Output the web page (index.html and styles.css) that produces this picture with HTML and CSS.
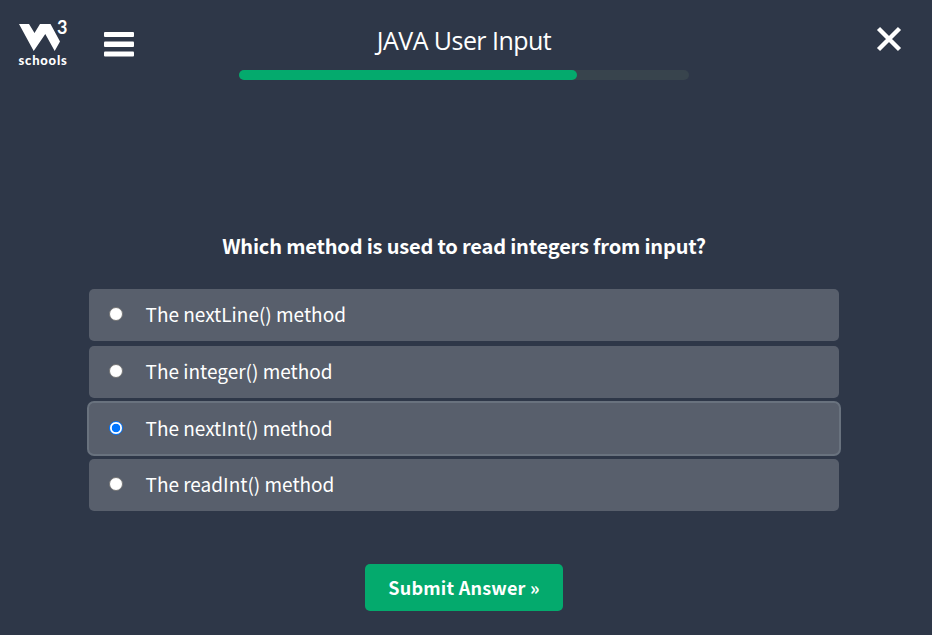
FILE: index.html
```html
<!DOCTYPE html>
<html lang="en">
<head>
<meta charset="utf-8">
<title>JAVA User Input</title>
<link rel="stylesheet" href="styles.css">
</head>
<body>
<header class="topbar">
  <a class="logo" aria-label="W3Schools">
    <span class="logo-top">
      <svg class="logo-mark" width="42" height="28" viewBox="0 0 42 28"><path fill="#fff" d="M0 0H10L15.500 9L21 0H31.500L41 17.500L35.700 27L26.300 10L14.700 27Z"/></svg>
      <span class="logo-three">3</span>
    </span>
    <span class="logo-word">schools</span>
  </a>
  <svg class="menu" width="30" height="25" viewBox="0 0 30 25"><g fill="#fff"><rect width="30" height="5" rx="1"/><rect y="9.500" width="30" height="5.500" rx="1"/><rect y="19.500" width="30" height="5" rx="1"/></g></svg>
  <div class="heading">
    <h1>JAVA User Input</h1>
    <div class="track"><div class="fill"></div></div>
  </div>
  <svg class="close" width="26" height="26" viewBox="0 0 26 26"><path d="M2.500 2.500L23.500 23.500M23.500 2.500L2.500 23.500" stroke="#fff" stroke-width="4.400"/></svg>
</header>
<main class="quiz">
  <h2>Which method is used to read integers from input?</h2>
  <div class="options">
    <label class="option"><span class="radio"></span><span class="answer">The nextLine() method</span></label>
    <label class="option"><span class="radio"></span><span class="answer">The integer() method</span></label>
    <label class="option selected"><span class="radio"></span><span class="answer">The nextInt() method</span></label>
    <label class="option"><span class="radio"></span><span class="answer">The readInt() method</span></label>
  </div>
  <button class="submit">Submit Answer »</button>
</main>
</body>
</html>
```
FILE: styles.css
```css
* { box-sizing: border-box; }
body {
  margin: 0;
  height: 635px;
  overflow: hidden;
  background: #2e3748;
  color: #fff;
  font-family: "Noto Sans CJK SC", "Open Sans", sans-serif;
}
.topbar { display: flex; align-items: flex-start; height: 100px; }
.logo { width: 50px; margin: 18px 0 0 18px; display: block; }
.logo-top { display: flex; height: 34px; }
.logo-mark { margin: 6px 0 0 1px; flex: none; }
.logo-three { font: 700 18px/18px Lato, sans-serif; margin-left: -4px; }
.logo-word { display: block; font: 900 13px/16px Lato, sans-serif; letter-spacing: 0.8px; padding-left: 0.500px; }
.menu { margin: 32px 0 0 36.400px; flex: none; }
.heading { width: 450px; margin: 22px 0 0 104.600px; }
h1 {
  margin: 0;
  text-align: center;
  font: 400 25px/36px "Open Sans", sans-serif;
  letter-spacing: -0.55px;
}
.track { height: 10px; margin-top: 12px; border-radius: 5px; background: #38444d; }
.fill { width: 338px; height: 10px; border-radius: 5px; background: #04aa6d; }
.close { margin: 26px 0 0 187px; flex: none; }
.quiz { width: 750px; margin-left: 89px; display: flex; flex-direction: column; align-items: center; }
h2 {
  margin: 130px 0 0;
  font-size: 20px;
  line-height: 32px;
  font-weight: 700;
  letter-spacing: -0.18px;
  white-space: nowrap;
}
.options { width: 100%; margin-top: 27px; display: grid; grid-template-rows: 52px 52px 51px 52px; gap: 5px; }
.option {
  display: flex;
  align-items: center;
  padding-left: 20px;
  border-radius: 5px;
  background: #585f6c;
  font-size: 19px;
  line-height: 30px;
}
.answer { padding-bottom: 2px; }
.selected { box-shadow: 0 0 0 2px #69727e; }
.radio {
  width: 14px;
  height: 14px;
  margin: 0 22.500px 3px 0;
  border: 1px solid #767676;
  border-radius: 50%;
  background: #fff;
}
.selected .radio { margin-bottom: 2px; border: 1.500px solid #0075ff; background: radial-gradient(circle, #0075ff 4px, #fff 4.600px); }
.submit {
  width: 198px;
  height: 47px;
  margin-top: 53px;
  padding: 0 0 2px;
  border: 0;
  border-radius: 5px;
  background: #04aa6d;
  color: #fff;
  font: 700 18px/30px "Noto Sans CJK SC", sans-serif;
  letter-spacing: 0.22px;
}
```
